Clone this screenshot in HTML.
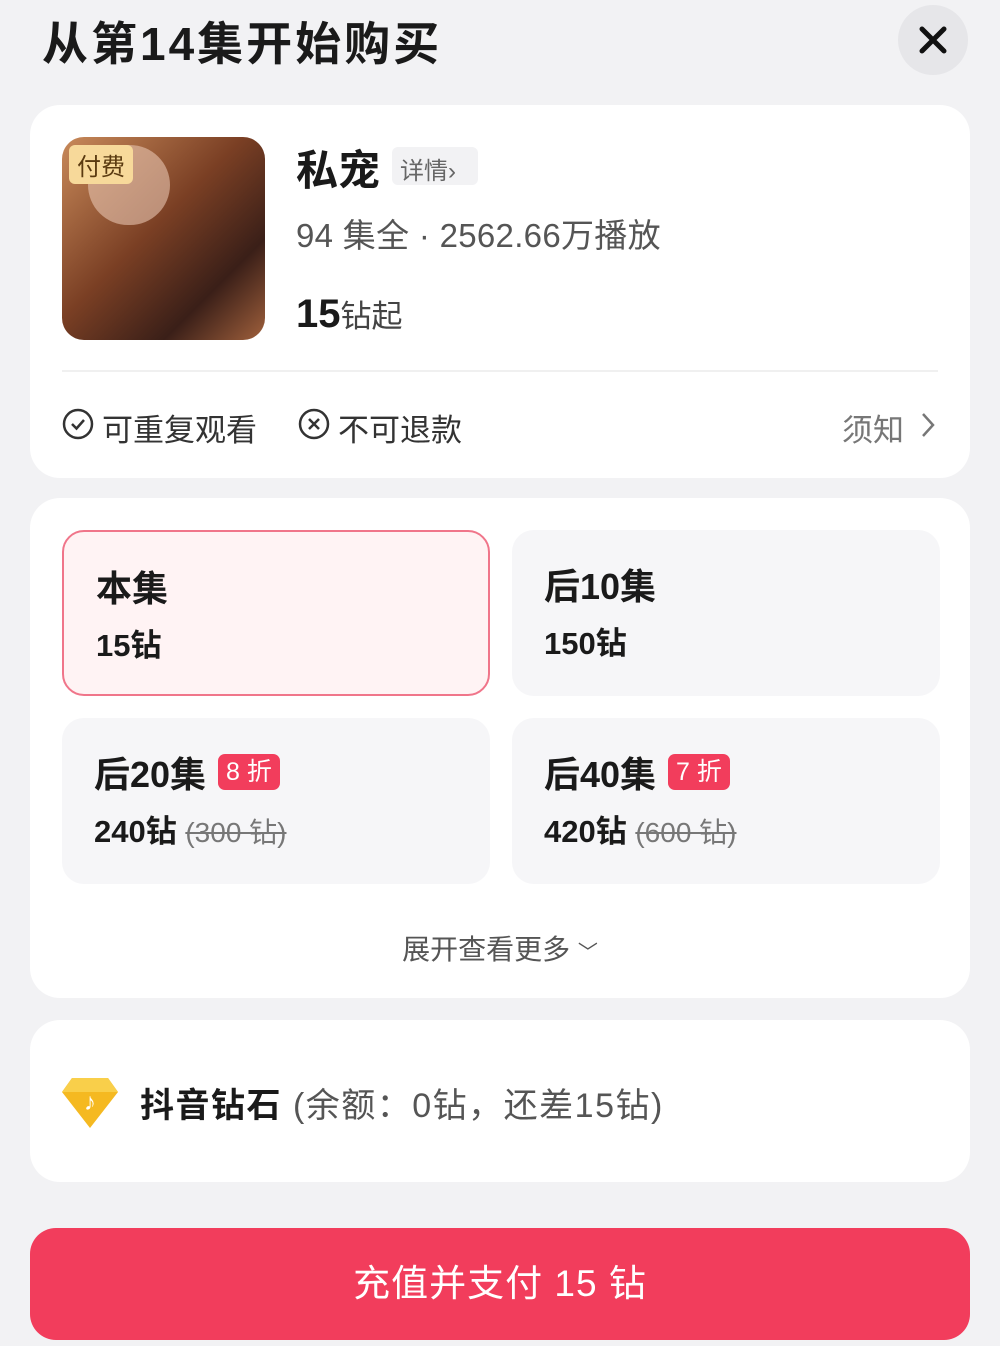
<!DOCTYPE html>
<html><head><meta charset="utf-8"><style>
*{margin:0;padding:0;box-sizing:border-box}
body{width:1000px;height:1346px;background:#f2f2f4;font-family:"Liberation Sans","Noto Sans CJK SC",sans-serif;position:relative;overflow:hidden;color:#1a1a1a}
.a{position:absolute}
.card{position:absolute;left:30px;width:940px;background:#fff;border-radius:30px}
.opt{position:absolute;width:428px;height:166px;border-radius:22px;background:#f6f6f8}
.opt .t{position:absolute;left:32px;top:28px;font-size:36px;font-weight:bold;display:flex;align-items:center}
.opt .p{position:absolute;left:32px;top:88px;font-size:31px;font-weight:bold}
.tag{background:#f23d5c;color:#fff;font-size:25px;font-weight:normal;border-radius:7px;padding:2px 8px;margin-left:12px;line-height:32px}
.s{color:#777;font-weight:normal;text-decoration:line-through;font-size:28px}
</style></head><body>
<div class="a" style="left:42px;top:8px;font-size:46px;font-weight:bold;color:#1a1a1a;letter-spacing:3px">从第14集开始购买</div>
<div class="a" style="left:898px;top:5px;width:70px;height:70px;border-radius:50%;background:#e6e6e9"></div>
<svg class="a" style="left:918px;top:25px" width="30" height="30"><path d="M4 4L26 26M26 4L4 26" stroke="#111" stroke-width="5" stroke-linecap="round"/></svg>

<div class="card" style="top:105px;height:373px">
 <div class="a" style="left:32px;top:32px;width:203px;height:203px;border-radius:22px;background:linear-gradient(135deg,#c98a5a,#7a3f24 45%,#3a1f18 75%,#a0603c)"></div>
 <div class="a" style="left:58px;top:40px;width:82px;height:80px;border-radius:40px;background:#e8c4b0;opacity:.6"></div>
 <div class="a" style="left:39px;top:40px;background:#f7d99a;color:#5a3a10;font-size:24px;border-radius:6px;padding:2px 8px">付费</div>
 <div class="a" style="left:266px;top:32px;font-size:42px;font-weight:bold">私宠</div>
 <div class="a" style="left:362px;top:42px;width:86px;height:38px;background:#f2f2f4;border-radius:6px;font-size:24px;color:#666;padding:4px 8px">详情›</div>
 <div class="a" style="left:266px;top:104px;font-size:33px;color:#555;letter-spacing:.3px">94 集全 · 2562.66万播放</div>
 <div class="a" style="left:266px;top:186px;font-size:40px;font-weight:bold;color:#1a1a1a">15<span style="font-size:31px;font-weight:normal;color:#444">钻起</span></div>
 <div class="a" style="left:32px;top:265px;width:876px;height:2px;background:#f0f0f0"></div>
 <svg class="a" style="left:32px;top:303px" width="32" height="32"><circle cx="16" cy="16" r="14" fill="none" stroke="#333" stroke-width="2.5"/><path d="M10 16l4.5 4.5L22 12" fill="none" stroke="#333" stroke-width="2.5"/></svg>
 <div class="a" style="left:72px;top:300px;font-size:31px;color:#333">可重复观看</div>
 <svg class="a" style="left:268px;top:303px" width="32" height="32"><circle cx="16" cy="16" r="14" fill="none" stroke="#333" stroke-width="2.5"/><path d="M11 11l10 10M21 11l-10 10" stroke="#333" stroke-width="2.5"/></svg>
 <div class="a" style="left:308px;top:300px;font-size:31px;color:#333">不可退款</div>
 <div class="a" style="left:812px;top:300px;font-size:31px;color:#777">须知</div>
 <svg class="a" style="left:888px;top:306px" width="20" height="28"><path d="M5 3l10 11-10 11" fill="none" stroke="#777" stroke-width="2.5"/></svg>
</div>

<div class="card" style="top:498px;height:500px">
 <div class="opt" style="left:32px;top:32px;background:#fff3f4;border:2px solid #f0758a"><div class="t">本集</div><div class="p">15钻</div></div>
 <div class="opt" style="left:482px;top:32px"><div class="t">后10集</div><div class="p">150钻</div></div>
 <div class="opt" style="left:32px;top:220px"><div class="t">后20集<span class="tag">8 折</span></div><div class="p">240钻 <span class="s">(300 钻)</span></div></div>
 <div class="opt" style="left:482px;top:220px"><div class="t">后40集<span class="tag">7 折</span></div><div class="p">420钻 <span class="s">(600 钻)</span></div></div>
 <div class="a" style="left:0;width:940px;top:430px;text-align:center;font-size:28px;color:#555">展开查看更多 <span style="font-size:20px">﹀</span></div>
</div>

<div class="card" style="top:1020px;height:162px">
 <svg class="a" style="left:30px;top:54px" width="60" height="56"><path d="M12 4h36l10 14-28 36L2 18z" fill="#f5b921"/><path d="M12 4h36l10 14H2z" fill="#f9cf4a"/><text x="30" y="36" font-size="24" fill="#fff" text-anchor="middle" font-family="Liberation Sans">♪</text></svg>
 <div class="a" style="left:110px;top:58px;font-size:34px;letter-spacing:1.5px"><b>抖音钻石</b> <span style="color:#555">(余额：0钻，还差15钻)</span></div>
</div>

<div class="a" style="left:30px;top:1228px;width:940px;height:112px;border-radius:26px;background:#f23d5c;color:#fff;font-size:37px;text-align:center;line-height:112px;letter-spacing:1px">充值并支付 15 钻</div>
</body></html>
